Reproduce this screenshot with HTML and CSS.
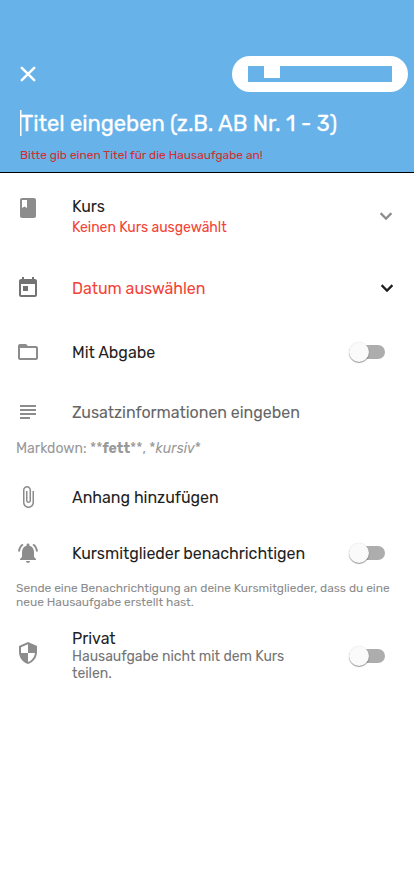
FILE: index.html
```html
<!DOCTYPE html>
<html lang="de">
<head>
<meta charset="utf-8">
<title>Hausaufgabe</title>
<link rel="stylesheet" href="styles.css">
</head>
<body>
<header class="header">
  <div class="toolbar">
    <svg class="close" viewBox="0 0 24 24"><path d="M5.200 5.200 18.800 18.800M18.800 5.200 5.200 18.800"/></svg>
    <div class="save"><div class="save-label"><span class="notch"></span></div></div>
  </div>
  <div class="title">Titel eingeben (z.B. AB Nr. 1 - 3)</div>
  <div class="error">Bitte gib einen Titel für die Hausaufgabe an!</div>
</header>
<main>
  <section class="row course">
    <svg class="icon" viewBox="0 0 24 24"><path d="M18 2H6c-1.100 0-2 .9-2 2v16c0 1.100.9 2 2 2h12c1.100 0 2-.9 2-2V4c0-1.100-.9-2-2-2zM6 4h5v8l-2.500-1.500L6 12V4z"/></svg>
    <div class="text"><div class="label">Kurs</div><div class="sub red">Keinen Kurs ausgewählt</div></div>
    <svg class="chevron" viewBox="0 0 24 24"><path d="M7.410 8.590 12 13.170l4.590-4.580L18 10l-6 6-6-6z"/></svg>
  </section>
  <section class="row date">
    <svg class="icon dark" viewBox="0 0 24 24"><path d="M19 3h-1V1h-2v2H8V1H6v2H5c-1.110 0-1.990.9-1.990 2L3 19c0 1.100.89 2 2 2h14c1.100 0 2-.9 2-2V5c0-1.100-.9-2-2-2zm0 16H5V8h14v11zM7 10h5v5H7z"/></svg>
    <div class="label red">Datum auswählen</div>
    <svg class="chevron" viewBox="0 0 24 24"><path d="M7.410 8.590 12 13.170l4.590-4.580L18 10l-6 6-6-6z"/></svg>
  </section>
  <section class="row submit">
    <svg class="icon" viewBox="0 0 24 24"><path d="M20 6h-8l-2-2H4c-1.100 0-1.990.9-1.990 2L2 18c0 1.100.9 2 2 2h16c1.100 0 2-.9 2-2V8c0-1.100-.9-2-2-2zm0 12H4V8h16v10z"/></svg>
    <div class="label">Mit Abgabe</div>
    <div class="switch"></div>
  </section>
  <section class="row info">
    <svg class="icon" viewBox="0 0 24 24"><path d="M4 5h16v2H4zM4 9h16v2H4zM4 13h16v2H4zM4 17h10v2H4z"/></svg>
    <div class="label hint">Zusatzinformationen eingeben</div>
  </section>
  <div class="markdown">Markdown: **<b>fett</b>**, *<i>kursiv</i>*</div>
  <section class="row attach">
    <svg class="icon" viewBox="0 0 24 24"><path d="M16.500 6v11.500c0 2.210-1.790 4-4 4s-4-1.790-4-4V5c0-1.380 1.120-2.500 2.500-2.500s2.500 1.120 2.500 2.500v10.500c0 .55-.45 1-1 1s-1-.45-1-1V6H10v9.500c0 1.380 1.120 2.500 2.500 2.500s2.500-1.120 2.500-2.500V5c0-2.210-1.790-4-4-4S7 2.790 7 5v12.500c0 3.040 2.460 5.500 5.500 5.500s5.500-2.460 5.500-5.500V6h-1.500z"/></svg>
    <div class="label">Anhang hinzufügen</div>
  </section>
  <section class="row notify">
    <svg class="icon" viewBox="0 0 24 24"><path d="M7.580 4.080 6.150 2.650C3.750 4.480 2.170 7.300 2.030 10.500h2c.15-2.650 1.510-4.970 3.550-6.420zm12.390 6.420h2c-.15-3.200-1.730-6.020-4.120-7.850l-1.420 1.430c2.020 1.450 3.390 3.770 3.540 6.420zM18 11c0-3.070-1.640-5.640-4.500-6.320V4c0-.83-.67-1.500-1.500-1.500s-1.500.67-1.500 1.500v.68C7.630 5.360 6 7.920 6 11v5l-2 2v1h16v-1l-2-2v-5zm-6 11c1.100 0 2-.9 2-2h-4c0 1.100.9 2 2 2z"/></svg>
    <div class="label">Kursmitglieder benachrichtigen</div>
    <div class="switch"></div>
  </section>
  <div class="note">Sende eine Benachrichtigung an deine Kursmitglieder, dass du eine<br>neue Hausaufgabe erstellt hast.</div>
  <section class="row private">
    <svg class="icon" viewBox="0 0 24 24"><path d="M12 1 3 5v6c0 5.550 3.840 10.740 9 12 5.160-1.260 9-6.450 9-12V5l-9-4zm0 10.990h7c-.53 4.120-3.280 7.790-7 8.940V12H5V6.300l7-3.110v8.800z"/></svg>
    <div class="text"><div class="label">Privat</div><div class="sub">Hausaufgabe nicht mit dem Kurs<br>teilen.</div></div>
    <div class="switch"></div>
  </section>
</main>
</body>
</html>
```
FILE: styles.css
```css
* { box-sizing: border-box; }
body { margin: 0; background: #fff; font-family: Rubik, Roboto, sans-serif; color: #1f1f1f; }
svg { display: block; flex: none; }
.header { height: 173px; padding-top: 56px; background: #68b2ea; border-bottom: 1px solid #000; color: #fff; white-space: nowrap; }
.toolbar { display: flex; justify-content: space-between; align-items: center; height: 36px; padding: 0 6px 0 17px; }
.close { width: 22px; height: 22px; stroke: #fff; stroke-width: 2.7; stroke-linecap: round; }
.save { width: 176px; height: 36px; border-radius: 18px; background: #fff; padding: 10px 16px; }
.save-label { height: 16px; background: #68b2ea; padding-left: 16px; }
.notch { display: block; width: 16px; height: 12px; background: #fff; }
.title { height: 26px; margin: 18px 0 0 20px; box-shadow: inset 1.500px 0 #fff; padding-left: .5px; font-size: 22px; line-height: 27px; letter-spacing: -.045px; -webkit-text-stroke: .3px #fff; }
.error { margin: 12px 0 0 20px; font-size: 12px; line-height: 14px; letter-spacing: -.02px; color: #d32f2f; }
.row { display: flex; align-items: center; padding: 0 16px; }
.icon { width: 24px; height: 24px; margin-right: 32px; fill: #8c8c8c; }
.dark { fill: #737373; }
.label { flex: 1; padding-top: 2px; font-size: 16px; line-height: 20px; letter-spacing: -.035px; }
.text { flex: 1; }
.sub { font-size: 14px; line-height: 17px; letter-spacing: -.03px; color: #757575; }
.red, .sub.red { color: #f44336; }
.hint { color: #666; }
.chevron { width: 24px; height: 24px; fill: #8c8c8c; stroke: #8c8c8c; stroke-width: .4; }
.course { height: 83px; padding: 23px 16px 0; align-items: flex-start; }
.course .label { padding-top: 1px; }
.course .sub { margin-top: 2px; }
.course .chevron { margin-top: 8px; }
.date { height: 64px; padding-right: 15px; }
.date .chevron { fill: #1c1c1c; stroke: #1c1c1c; }
.submit { height: 64px; }
.info { height: 56px; }
.markdown { padding-left: 16px; height: 29px; font-size: 14px; line-height: 17px; color: #999; }
.attach, .notify { height: 56px; }
.note { padding-left: 16px; font-size: 12px; line-height: 14px; letter-spacing: -.02px; color: #8c8c8c; }
.private { height: 66px; margin-top: 16px; align-items: flex-start; padding-top: 3px; }
.private .icon { margin-top: 13px; }
.private .label { line-height: 19px; padding-top: 1px; }
.private .switch { margin-top: 20.5px; }
.switch { position: relative; width: 32px; height: 14px; margin-right: 13px; border-radius: 7px; background: #adadad; }
.switch::before { content: ""; position: absolute; left: -4px; top: -3px; width: 20px; height: 20px; border-radius: 50%; background: #fafafa; box-shadow: 0 1px 1px rgba(0,0,0,.4), 0 0 1px rgba(0,0,0,.15); }
```
